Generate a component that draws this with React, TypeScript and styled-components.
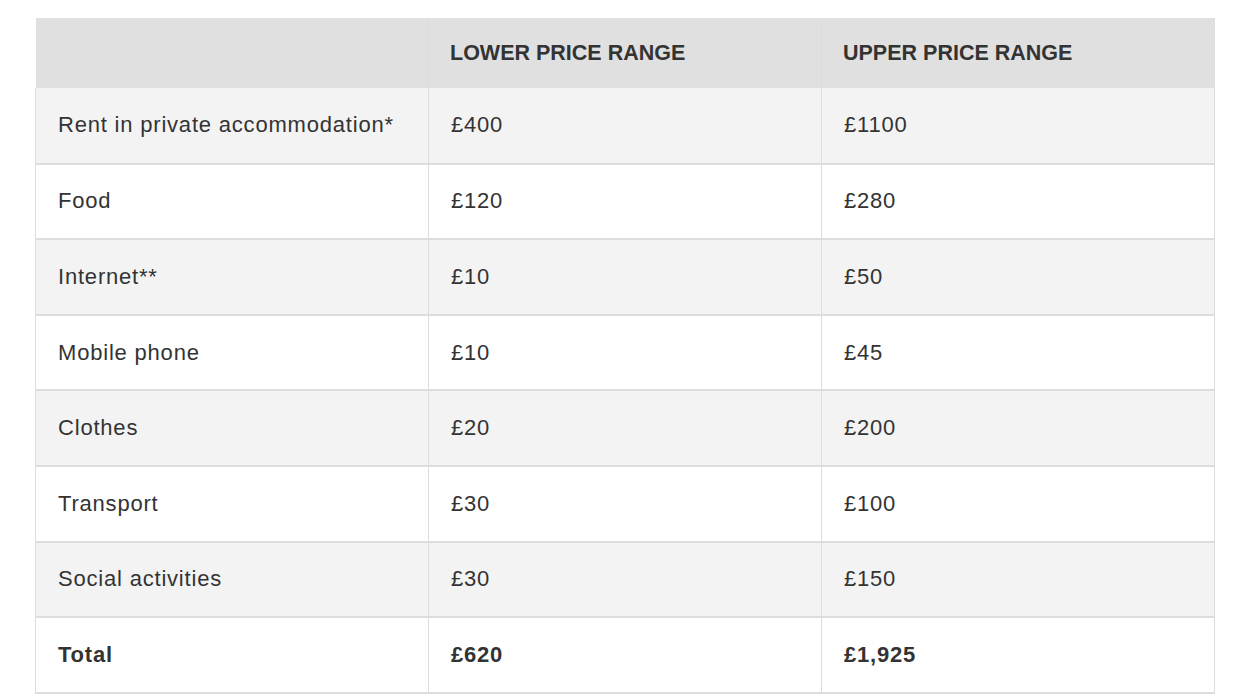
import React from "react";
import styled, { createGlobalStyle } from "styled-components";

const Global = createGlobalStyle`
  body {
    margin: 0;
    background: #ffffff;
    font-family: "Liberation Sans", Arial, sans-serif;
    color: #333333;
  }
`;

const Page = styled.div`
  padding: 18px 39px 0 35px;
`;

const Table = styled.table`
  width: 1180px;
  border-collapse: collapse;
  table-layout: fixed;
`;

const HeadCell = styled.th`
  background: #e0e0e0;
  height: 70px;
  padding: 0 21px;
  text-align: left;
  font-size: 21.5px;
  font-weight: 700;
  color: #333333;
  text-transform: uppercase;
  box-sizing: border-box;
  border: none;
  border-left: 1px solid #dcdcdc;
  &:first-child {
    border-left: none;
  }
`;

const Row = styled.tr<{ $shade: boolean }>`
  background: ${(p) => (p.$shade ? "#f3f3f3" : "#ffffff")};
  border-bottom: 2px solid #dddddd;
`;

const Cell = styled.td<{ $bold?: boolean }>`
  height: 75.6px;
  padding: 0 22px;
  font-size: 22px;
  letter-spacing: 0.8px;
  font-weight: ${(p) => (p.$bold ? 700 : 400)};
  color: #333333;
  border-left: 1px solid #dddddd;
  border-right: 1px solid #dddddd;
  box-sizing: border-box;
`;

const rows: [string, string, string][] = [
  ["Rent in private accommodation*", "£400", "£1100"],
  ["Food", "£120", "£280"],
  ["Internet**", "£10", "£50"],
  ["Mobile phone", "£10", "£45"],
  ["Clothes", "£20", "£200"],
  ["Transport", "£30", "£100"],
  ["Social activities", "£30", "£150"],
];

export default function App() {
  return (
    <>
      <Global />
      <Page>
        <Table>
          <thead>
            <tr>
              <HeadCell></HeadCell>
              <HeadCell>Lower price range</HeadCell>
              <HeadCell>Upper price range</HeadCell>
            </tr>
          </thead>
          <tbody>
            {rows.map((r, i) => (
              <Row key={r[0]} $shade={i % 2 === 0}>
                <Cell>{r[0]}</Cell>
                <Cell>{r[1]}</Cell>
                <Cell>{r[2]}</Cell>
              </Row>
            ))}
            <Row $shade={false}>
              <Cell $bold>Total</Cell>
              <Cell $bold>£620</Cell>
              <Cell $bold>£1,925</Cell>
            </Row>
          </tbody>
        </Table>
      </Page>
    </>
  );
}
